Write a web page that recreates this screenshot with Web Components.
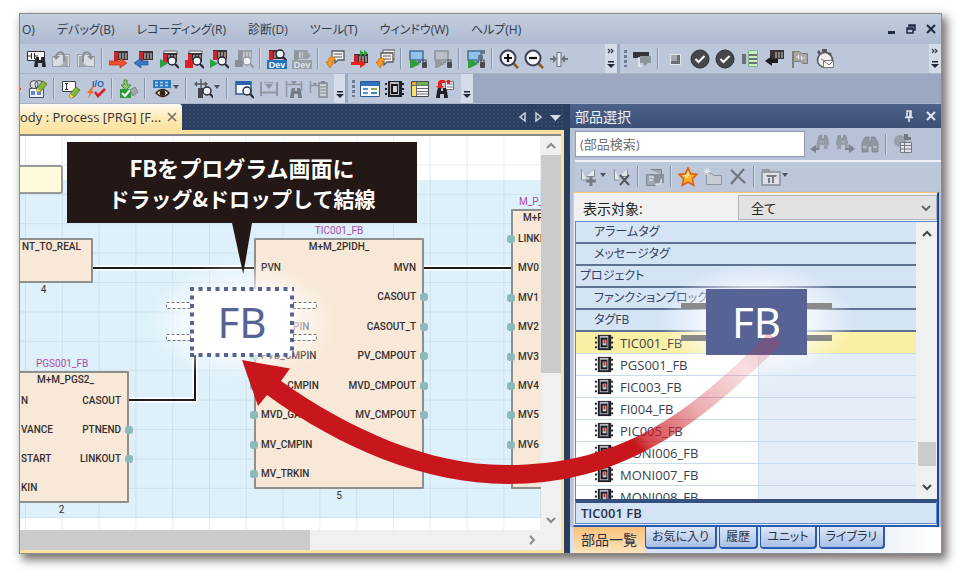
<!DOCTYPE html>
<html lang="ja">
<head>
<meta charset="utf-8">
<title>部品選択</title>
<style>
html,body{margin:0;background:#fff}
body{font-family:"Open Sans","Noto Sans CJK JP",sans-serif;font-feature-settings:"palt";color:#2b3245}
</style>
</head>
<body>
<app-window></app-window>
<script>
const plc=(x,y,a='#d2232a',b='#3b3234',c='#8b8584')=>`<path fill="${b}" d="M${x} ${y}h14v9h-14z"/><path fill="${a}" d="M${x} ${y+1}h4v9h-4z"/><path fill="${c}" d="M${x+5} ${y+2}h2v6h-2zM${x+8} ${y+2}h2v6h-2zM${x+11} ${y+2}h2v6h-2z"/>`;
const mag=(x,y,c='#262633')=>`<circle cx="${x}" cy="${y}" r="4" fill="#eef4fa" stroke="${c}" stroke-width="1.4"/><path d="M${x+3} ${y+3}l4 4" stroke="${c}" stroke-width="2.2"/>`;
const bino=(x,y,c)=>`<path fill="${c}" d="M${x+1} ${y+3}l1-3h3v3h2v-3h3l1 3 1 7h-4v-4h-4v4h-4z"/>`;
const pen=(x,y)=>`<path fill="#86b636" stroke="#4b6b22" stroke-width=".8" d="M${x+7} ${y}l4 3-6 7-4 1v-4z"/><path fill="#fbd54a" d="M${x+1} ${y+7}l4 3-4 1z"/>`;
const page=(x,y,c)=>`<path fill="#f3f3f1" stroke="${c}" stroke-width="1.3" d="M${x} ${y}h12v9h-6l-3 3v-3h-3z"/><path stroke="${c}" d="M${x+2} ${y+3}h8M${x+2} ${y+6}h8"/>`;
const pc=(s,f,w)=>`<path fill="${s}" stroke="${f}" stroke-width="1.5" d="M2 2h13v9h-13z"/><path fill="${w}" d="M2 11h5l5 4-8 4h-2z"/><path fill="${f}" d="M10 12h3v2h-3z"/><rect x="14" y="13" width="5" height="6" rx="1" fill="#4a4b50"/><path d="M15 13v-2h3v2" fill="none" stroke="#4a4b50" stroke-width="1.2"/>`;
const word=(t,x,y,c)=>`<text x="${x}" y="${y}" text-anchor="middle" font-family="Liberation Sans,sans-serif" font-size="9" font-weight="700" fill="${c}">${t}</text>`;
const chip=`<path fill="#20222a" d="M3 2h14v16h-14z"/><path fill="#b9bac0" d="M5 3h9v13h-9z"/><path fill="#17181d" d="M6 5h7v10h-7z"/><path fill="#cfd0d4" d="M8 7h4v6h-4z"/><path fill="#20222a" d="M0 4h2v2h-2zM0 9h2v2h-2zM0 14h2v2h-2zM17 4h2v2h-2zM17 9h2v2h-2zM17 14h2v2h-2z"/>`;
const ICONS={
 find:`<path fill="#f7f7f7" stroke="#2e2e33" d="M1.500 2.500h17v9h-17z"/><path stroke="#2e2e33" fill="none" d="M2 7h4M5.500 4v6M8.500 4v6M9 7h3"/>`+bino(8,8,'#27272c'),
 back:`<path fill="#d9dce1" stroke="#9ba0a8" d="M1.500 7.500h5v-2h12v12h-17z"/><path fill="#a5aab2" d="M12 7h5v10h-9q7-2 4-10z"/><path fill="none" stroke="#8a8f97" stroke-width="2" d="M5 8c1-6 7-6 8-1v6"/><path fill="#8a8f97" d="M2 7h7l-4 4z"/>`,
 fwd:`<path fill="#d9dce1" stroke="#9ba0a8" d="M18.500 7.500h-5v-2h-12v12h17z"/><path fill="#a5aab2" d="M8 7h-5v10h9q-7-2-4-10z"/><path fill="none" stroke="#8a8f97" stroke-width="2" d="M15 8c-1-6-7-6-8-1v6"/><path fill="#8a8f97" d="M18 7h-7l4 4z"/>`,
 write:plc(5,2)+`<path fill="#f0512b" stroke="#b62a14" stroke-width=".6" d="M0 12h11v-3l7 5-7 5v-3h-11z"/>`,
 read:plc(5,2)+`<path fill="#3b78c8" stroke="#1d4a91" stroke-width=".6" d="M14 12h-7v-3l-7 5 7 5v-3h7z"/>`,
 monstart:`<path fill="#eee" stroke="#666" d="M5 2h13v4h-13z"/>`+plc(4,4)+`<path fill="#2f9e3c" d="M1 10l8 4.500-8 4.500z"/>`+mag(13,12),
 monstop:`<path fill="#eee" stroke="#666" d="M5 2h13v4h-13z"/>`+plc(4,4)+`<path fill="#e01f26" d="M1 11h8v8h-8z"/>`+mag(13,12),
 watch:plc(4,1)+`<path fill="#2f9e3c" d="M1 10l8 4.500-8 4.500z"/>`+mag(13,12),
 watchoff:plc(4,1,'#8f939b','#9a9ea6','#c0c4cc')+`<path fill="#898d95" d="M1 11h8v7h-8z"/>`+mag(13,12,'#9599a1'),
 dev:plc(2,1)+mag(13,5)+`<path fill="#1c75bc" d="M0 11h20v9h-20z"/>`+word('Dev',10,19,'#fff'),
 devoff:plc(2,1,'#8f939b','#9a9ea6','#c0c4cc')+`<path fill="#9ba0a8" d="M0 11h20v9h-20zM11 3h5l3 4-4 3h-4z"/>`+word('Dev',10,19,'#dfe3ea'),
 jump:page(7,2,'#58595e')+`<path fill="#f79a1e" stroke="#c5650b" stroke-width=".7" d="M9 8q-6-1-6 5h-2l4 6 4-6h-2q0-2 3-2z"/>`,
 step:plc(4,5)+`<path fill="#34a045" d="M10 1l4 3-4 3zM14 1l4 3-4 3z"/><path fill="#e6231e" d="M1 13h9v-3l6 5-6 4v-3h-9z"/>`,
 jumpall:page(8,1,'#77787c')+page(6,4,'#58595e')+`<path fill="#f79a1e" stroke="#c5650b" stroke-width=".7" d="M8 9q-5-1-5 4h-2l4 6 4-6h-2q0-2 3-2z"/>`,
 sim:pc('#8fc3ee','#4b6e92','#2f9e3c'),
 simoff:pc('#b9bec8','#8d929a','#9599a1'),
 simall:pc('#8fc3ee','#4b6e92','#2f9e3c')+`<path fill="#6a7686" d="M15 1h4v4h-4zM12 6h5v4h-5z"/>`,
 zin:`<path d="M14 14l5 5" stroke="#8a5a20" stroke-width="2.500"/><circle cx="9" cy="9" r="7.500" fill="#f4f7fb" stroke="#3d4057" stroke-width="2"/><path stroke="#111" stroke-width="2.200" d="M5 9h8M9 5v8"/>`,
 zout:`<path d="M14 14l5 5" stroke="#8a5a20" stroke-width="2.500"/><circle cx="9" cy="9" r="7.500" fill="#f4f7fb" stroke="#3d4057" stroke-width="2"/><path stroke="#111" stroke-width="2.200" d="M5 9h8"/>`,
 fit:`<path fill="#e7ebf1" stroke="#6b7079" d="M8 3.500h4v14h-4z"/><path fill="#6b7079" d="M1 9h3v-3l4 4-4 4v-3h-3zM19 9h-3v-3l-4 4 4 4v-3h3z"/>`,
 rack:`<path fill="#33353a" d="M1 3h16v6h-16z"/><path fill="#8e949c" d="M8 7h11v7h-3l-3 3-2-3h-3z"/><path stroke="#e9edf2" stroke-width="1.500" fill="none" d="M7 8v9h3"/>`,
 stop:`<path fill="#a4a8ae" stroke="#e3e7ec" d="M5.500 5.500h10v10h-10z"/><path fill="#6a6d73" d="M12 6h3v9h-9v-3h6z"/>`,
 check:`<circle cx="10" cy="10" r="9" fill="#46474c" stroke="#2e2f34"/><path fill="none" stroke="#fff" stroke-width="2" d="M5.500 10l3 3 6-6"/>`,
 compare:`<path fill="#6c7278" d="M2 5h4v10h-4z"/><path fill="#c9ecc3" stroke="#85b583" d="M8.500 1.500h9v16h-9z"/><path fill="#6c7278" d="M9 5h8v2h-8zM9 9h8v2h-8zM9 13h8v2h-8z"/>`,
 load:plc(5,1,'#3b3234')+`<path fill="#1c1c20" d="M13 10h-6v-3l-7 5 7 5v-3h6z"/>`,
 flag:`<path fill="#a8a7a4" stroke="#7f7e7b" d="M3.500 2.500h6l2 2h6v10h-5l-2-2h-7z"/><path stroke="#7f7e7b" stroke-width="2" d="M3 2v17"/><path stroke="#eee" fill="none" d="M6 8h2M8.500 6v4M11.500 7v4M12 9h3"/>`,
 timer:`<circle cx="10" cy="11" r="7.500" fill="#efeeec" stroke="#55565a" stroke-width="1.600"/><path fill="#55565a" d="M7 0h5v3h-5zM2 3l2-2 2 3-2 2zM14 3l3 2-2 2-2-2z"/><path fill="#fff" stroke="#77787c" d="M8.500 11.500h10v7h-10z"/><path fill="none" stroke="#77787c" d="M9 12l5 4 4-4M6 10l4 2"/>`,
 edge:`<path fill="#fff3d8" stroke="#e5a947" d="M-2 .5h7.500v19h-7.500z"/><path fill="#e6231e" d="M0 5h3v9h-3z"/>`,
 props:`<path fill="#f1f3f8" stroke="#35507f" d="M1.500 9.500h14v9h-14z"/><circle cx="6" cy="5.500" r="4" fill="#d9dde4" stroke="#555"/><circle cx="11" cy="5.500" r="4" fill="none" stroke="#555"/><path fill="#6c84c9" d="M3 12h4v4h-4zM9 12h4v4h-4z"/>`+pen(8,2),
 edit:`<path fill="#fff" stroke="#3f4148" d="M1.500 2.500h13v10h-13z"/><path stroke="#333" d="M4 4.500h3M5.500 4.500v6M4 10.500h3"/>`+pen(8,8),
 io:word('I/O',12,8,'#2f5bb0')+`<path fill="#f4672a" d="M6 8l-5 6h3l-2 5 6-7h-3l3-4z"/><path fill="none" stroke="#d61f26" stroke-width="2.500" d="M9 13l3 4 7-7"/>`,
 verify:`<path fill="#8dc66d" stroke="#4d8b36" d="M5 1h3v5h4l-5 5-5-5h3z"/><path fill="#a5a9ae" stroke="#71757b" stroke-width=".8" d="M11 11l5-3 3 5-5 4z"/><path fill="#2b9a3a" d="M1 10h11v9h-11z"/><path fill="none" stroke="#fff" stroke-width="2" d="M3 14l3 3 5-6"/>`,
 eye:`<path fill="#2d78c3" d="M1 1h18v8h-18z"/><path stroke="#b9d8f4" stroke-width="1.400" stroke-dasharray="3 2" d="M3 3.500h13M3 6.500h13"/><path fill="#fff" stroke="#33221c" stroke-width="1.400" d="M4 14q7-7 13 0q-6 7-13 0z"/><circle cx="10.500" cy="14" r="3" fill="#33221c"/>`,
 target:`<path fill="none" stroke="#55575d" stroke-width="1.300" d="M2 5h12M8 0v10M4 3l-2 2 2 2M12 3l2 2-2 2"/><path fill="#44454a" d="M5 9h5v10h-5z"/>`+mag(14,12),
 winfind:`<path fill="#f4f8fc" stroke="#2a5797" stroke-width="1.500" d="M2 3h15v12h-15z"/><path fill="#2c62ad" d="M2 2h15v4h-15z"/>`+mag(13,12),
 ladder:`<path fill="none" stroke="#92979f" stroke-width="2" d="M2 3v14M18 3v14M3 13.500h14"/><path stroke="#9da2aa" d="M5 3.500h10"/><path fill="#8e939b" d="M6 5h8l-4 5z"/>`,
 ladfind:`<path fill="#bfc3c9" stroke="#92979f" stroke-width="1.500" d="M2.500 2v16M17.500 2v10M3 5.500h14"/><path fill="#8e939b" d="M7 2h6l-3 4z"/>`+bino(6,9,'#777c84'),
 ladlist:`<path fill="none" stroke="#92979f" stroke-width="1.500" d="M1.500 2v12M2 6.500h7"/><path fill="#c9ccd1" stroke="#868b93" stroke-width="1.500" d="M10 4h8v14h-8z"/><path stroke="#868b93" d="M11 8h6M11 11h6M11 14h6"/><path fill="#868b93" d="M4 4h4l-2 3zM12 2h4v3h-4z"/>`,
 form:`<path fill="#f4f7fb" stroke="#2c5795" d="M.5 2.500h19v15h-19z"/><path fill="#3172bd" d="M1 3h18v4h-18z"/><path stroke="#5a90c8" stroke-width="2" d="M3 10h5M3 14h5"/><path stroke="#8bb04d" stroke-width="2" d="M11 10h6"/><path stroke="#3f8aa0" stroke-width="2" d="M11 14h6"/>`,
 chip:chip,chipred:chip+`<path fill="#d8262b" d="M9 7h2v4h-2z"/>`,
 table:`<path fill="#fdfdfd" stroke="#4a4b4f" d="M1.500 2.500h17v15h-17z"/><path fill="#efa73c" d="M2 3h16v3h-16z"/><path fill="#72b44c" d="M7 3h11v3h-11z"/><path stroke="#6c6d72" d="M2 6.500h16M2 9.500h16M2 12.500h16M2 15h16M6.500 3v14"/><path fill="#f5e36c" d="M2 7h4v10h-4z"/>`,
 xref:`<path fill="#e3241f" d="M5 1h5v3h-3v3h2l-4 4-4-4h2v-4z"/><path fill="#f5f5f5" stroke="#777" d="M10.500 2.500h8v8h-8z"/><path stroke="#6f82ac" d="M12 5h6M12 8h6"/><path fill="#e3241f" d="M12 1h3v4h-3z"/>`+bino(1,9,'#1f1f24'),
 bback:bino(7,1,'#8f959e')+bino(6,5,'#989ea7')+`<path fill="#7f858e" d="M9 14h-3v-3l-6 4 6 4v-3h3z"/>`,
 bnext:bino(1,1,'#8f959e')+bino(2,5,'#989ea7')+`<path fill="#7f858e" d="M10 14h4v-4l6 5-6 4v-3h-4z"/>`,
 bfind:`<path fill="#9298a1" stroke="#70757d" stroke-width=".6" d="M2 9l3-6h4v5h2v-5h4l3 6v9h-6v-6h-4v6h-6z"/><path stroke="#d5d9df" d="M3 13h4M13 13h4"/>`,
 dbtable:`<circle cx="7" cy="7" r="6" fill="#999fa8"/><path fill="#e0e3e7" stroke="#747981" d="M7.500 8.500h11v10h-11z"/><path stroke="#747981" d="M8 11.500h10M8 15h10M11.500 9v9"/><path fill="#747981" d="M11 0h4v3h3v3h-7z"/>`,
 add:`<path fill="#e4e7ec" stroke="#878c94" d="M2.500 2v11h5M7.500 9.500h8v-7"/><path fill="none" stroke="#777c85" stroke-width="3" d="M12 9v10M7 14h10"/>`,
 del:`<path fill="#e4e7ec" stroke="#878c94" d="M2.500 2v11h5M7.500 9.500h8v-7"/><path stroke="#53575e" stroke-width="2" d="M8 8l9 10M17 8l-9 10"/>`,
 stack:`<path fill="#a2a8b1" stroke="#7e848d" d="M1.500 7.500h9v11h-9zM5.500 2.500h11v5"/><path fill="#8b919a" d="M9 7h10v9h-10z"/><path fill="none" stroke="#d8dce2" stroke-width="1.500" d="M4 10h5M4 13h4M10 17c5 2 7-2 6-5"/>`,
 star:`<path fill="#ffb52d" stroke="#e0560e" stroke-width="1.500" d="M10 1l2.700 5.800 6.300.7-4.700 4.300 1.400 6.400L10 15l-5.700 3.200 1.400-6.400L1 7.500l6.300-.7z"/><path fill="#ffe394" d="M10 4l1.600 4-3 3-4-2.500 3.700-.8z"/>`,
 folder:`<path fill="#c8ccd3" stroke="#8e939c" d="M3.500 6.500h5l2 2h8v9h-15z"/><path stroke="#e9edf2" d="M4 1v7M.5 4.500h7M1.500 2l5 5M6.500 2l-5 5"/>`,
 x:`<path stroke="#6f747d" stroke-width="2.200" d="M3 3l14 13M16 2l-13 15"/>`,
 tools:`<path fill="#dde0e5" stroke="#868b94" stroke-width="1.400" d="M1 5h18v13h-18zM1 3h7v2"/><path fill="#767b84" d="M5 8h11l-1 2h-9zM7 11h2v5h-2zM11 10h2v6h-2z"/>`
};
const svg=(n,s=20)=>`<svg class="i" width="${s}" height="${s}" viewBox="0 0 20 20" aria-hidden="true">${ICONS[n]}</svg>`;
const define=(name,css,html)=>customElements.define(name,class extends HTMLElement{
  constructor(){super();this.attachShadow({mode:'open'})}
  connectedCallback(){this.shadowRoot.innerHTML=`<style>*{box-sizing:border-box}button{font:inherit;color:inherit;border:0;padding:0;background:none}svg{display:block}${css}</style>${typeof html==='function'?html(this):html}`}
});

define('tool-bar',`
:host{display:flex;align-items:center;gap:5px;padding-left:var(--lead,6px);background:var(--bar,#bcc7d9);overflow:hidden}
button{display:flex;align-items:center;flex:none}
.sep{width:3px;height:21px;flex:none;background:linear-gradient(90deg,#8593ae 1px,#d3dbe8 1px 2px,transparent 2px)}
.grip{width:3px;height:17px;flex:none;background:repeating-linear-gradient(#6d7b97 0 3px,transparent 3px 5px)}
.dd{width:0;height:0;border:3px solid transparent;border-top:4px solid #4c5464;margin:0 1px 0 1px}
.edge{width:6px;overflow:hidden;margin-right:-3px}
.more{margin-left:auto;align-self:stretch;width:12px;background:#d5dce8;flex-direction:column;justify-content:space-between;padding:4px 0 5px}
`,el=>el.getAttribute('items').split(' ').map(t=>{
  if(t==='|')return '<span class="sep"></span>';
  if(t===':')return '<span class="grip"></span>';
  if(t==='more'||t==='more2')return `<button class="more" aria-label="ツールバー オプション"><svg width="8" height="6" viewBox="0 0 8 6">${t==='more2'?'<path fill="none" stroke="#3b4150" stroke-width="1.300" d="M1 1l2 2-2 2M4 1l2 2-2 2"/>':''}</svg><svg width="8" height="7" viewBox="0 0 8 7"><path fill="#23293a" d="M1 0h6v1.500h-6zM0 3h8l-4 4z"/></svg></button>`;
  const d=t.endsWith('+'),n=d?t.slice(0,-1):t;
  return `<button class="${n}" aria-label="${n}">${svg(n)}${d?'<span class="dd"></span>':''}</button>`;
}).join(''));

define('menu-bar',`
:host{display:flex;align-items:center;height:30px;padding:0 5px 0 2px;background:linear-gradient(#c4cede,#aebad0);color:#333b4f}
nav{display:flex;gap:22px;flex:1;font-size:12px}button{white-space:nowrap}
.w{display:flex;gap:10px}
`,`<nav>${['O)','デバッグ(B)','レコーディング(R)','診断(D)','ツール(T)','ウィンドウ(W)','ヘルプ(H)'].map(t=>`<button>${t}</button>`).join('')}</nav>
<div class="w"><button aria-label="最小化"><svg width="9" height="10"><path fill="#1e2a44" d="M1 7h7v3h-7z"/></svg></button>
<button aria-label="元に戻す"><svg width="10" height="10"><path fill="none" stroke="#1e2a44" stroke-width="1.500" d="M3 3v-2h6v5h-2M1 4h6v5h-6zM1 5h6M3 2h6"/></svg></button>
<button aria-label="閉じる"><svg width="10" height="10"><path stroke="#1e2a44" stroke-width="2" d="M1 1l8 8M9 1l-8 8"/></svg></button></div>`);

define('fb-block',`
:host{position:absolute;display:block;font:500 10px/12px Roboto,"Liberation Sans",sans-serif;color:#33302f}
.box{position:relative;height:100%;background:#f8e8d7;border:2px solid #8f8f8f;border-radius:1px;display:grid;grid-template-columns:auto auto;grid-template-rows:auto 1fr;justify-content:space-between}
header{grid-column:1/3;text-align:var(--ta,center);padding:1px 4px 0 var(--hp,4px)}
ul{list-style:none;margin:0;padding:9px 6px 7px var(--pl,5px);display:flex;flex-direction:column;justify-content:space-between}
.r{text-align:right}
li{height:12px;position:relative;white-space:nowrap}
li.d::before{content:"";position:absolute;top:2px;left:-11px;width:8px;height:8px;border-radius:3px;background:#8db9ba}
.r li.d::before{left:auto;right:-12px}
li.in{padding-left:32px}
.t{position:absolute;left:0;right:0;bottom:100%;text-align:var(--ta,center);padding:0 4px 1px var(--tp,4px);color:#ae4ba5;font-weight:400}
.n{position:absolute;left:0;right:var(--nr,0px);top:100%;padding-top:1px;text-align:center;font-weight:400}
`,el=>{const a=n=>el.getAttribute(n)||'';const li=s=>s?s.split(',').map(t=>`<li class="${t[0]==='*'?'d':t[0]==='~'?'in':''}">${t.replace(/[*~]/,'')}</li>`).join(''):'';
return `<div class="t">${a('name')}</div><div class="box"><header>${a('type')}</header><ul>${li(a('in'))}</ul><ul class="r">${li(a('out'))}</ul></div><div class="n">${a('order')}</div>`});

define('diagram-canvas',`
:host{position:relative;display:block;overflow:hidden;background:#fff}
.bg{position:absolute;left:0;top:0}
fb-block.a{left:-2px;top:102px;width:75px;height:45px;--ta:left;--hp:2px;--nr:24px}
fb-block.b{left:-2px;top:235px;width:111px;height:132px;--pl:1px;--hp:17px;--tp:18px;--ta:left;--nr:24px}
fb-block.c{left:234px;top:102px;width:170px;height:251px}
fb-block.d{left:491px;top:73px;width:80px;height:280px;--ta:left;--hp:10px;--tp:8px}
.note{position:absolute;left:-4px;top:29px;width:47px;height:29px;background:#fdfbdc;border:2px solid #999;border-radius:3px}
`,`<svg class="bg" width="100%" height="100%"><defs><pattern id="g" x="5" y="0" width="36.800" height="29.400" patternUnits="userSpaceOnUse"><path fill="none" stroke="#7590a0" stroke-opacity=".16" stroke-width="2" d="M0 0v29.400M0 29.400h36.800"/></pattern></defs>
<rect y="44" width="100%" height="338" fill="#def0fa"/><rect width="100%" height="100%" fill="url(#g)"/>
<path fill="none" stroke="#fff" stroke-width="5" d="M72 132h163M403 132h89M108 264h67v-50"/><path fill="none" stroke="#1c1a1a" stroke-width="2" d="M72 132h163M403 132h89M108 264h67v-50"/></svg>
<div class="note"></div>
<fb-block class="a" type="NT_TO_REAL" order="4"></fb-block>
<fb-block class="b" name="PGS001_FB" type="M+M_PGS2_" in="N,VANCE,START,KIN" out="CASOUT,*PTNEND,*LINKOUT, " order="2"></fb-block>
<fb-block class="c" name="TIC001_FB" type="M+M_2PIDH_" in="PVN, ,~PIN,*PVD_CMPIN,*MVD_CMPIN,*MVD_GAIN,*MV_CMPIN,*MV_TRKIN" out="MVN,*CASOUT,*CASOUT_T,*PV_CMPOUT,*MVD_CMPOUT,*MV_CMPOUT, , " order="5"></fb-block>
<fb-block class="d" name="M_P_" type="M+P" in="*LINKI,MV0,*MV1,*MV2,*MV3,*MV4,*MV5,*MV6, "></fb-block>`);

const chev=(d,c='#8a8a8a')=>`<svg width="10" height="8" viewBox="0 0 10 8"><path fill="none" stroke="${c}" stroke-width="2" d="${d}"/></svg>`;
define('editor-pane',`
:host{display:grid;grid-template-rows:26px 1fr;background:#2c3e5f;padding-right:6px;min-width:0}
.strip{display:flex;align-items:center;background:radial-gradient(circle,#354a6d 0 1px,transparent 1px) 0 0/4px 4px,#2c3e5f}
.tab{display:flex;align-items:center;gap:6px;height:100%;padding:0 5px 0 0;background:linear-gradient(#fffbf0,#fdebb8 50%,#fbe2a0);border-radius:0 3px 0 0;font-size:13px;color:#33303a;white-space:nowrap}
.nav{margin-left:auto;display:flex;gap:7px;padding-right:3px}
.body{display:grid;grid-template:minmax(0,1fr) 20px/minmax(0,1fr) 20px;background:#f0f0f0;border:solid #fbe2a0;border-width:4px 3px 3px 0}
diagram-canvas,.v{border-top:2px solid #888}
.v{display:flex;flex-direction:column;align-items:center;padding:6px 0}
.v i{width:100%;flex:1;margin:5px 0 auto;max-height:218px;background:#cbcbcb}
.v svg:last-child{margin-top:auto}
.h{display:flex;align-items:center;justify-content:space-between;padding-right:5px}
.h i{width:290px;height:100%;background:#cbcbcb}
`,`<div class="strip"><div class="tab"><span>ody : Process [PRG] [F...</span><button aria-label="閉じる"><svg width="10" height="10"><path stroke="#776f63" stroke-width="1.600" d="M1 1l8 8M9 1l-8 8"/></svg></button></div>
<div class="nav"><svg width="9" height="12"><path fill="none" stroke="#c9d2e1" stroke-width="1.500" d="M7 2v8l-5-4z"/></svg><svg width="9" height="12"><path fill="none" stroke="#c9d2e1" stroke-width="1.500" d="M2 2v8l5-4z"/></svg><svg width="11" height="12"><path fill="#d3dbe7" d="M0 4h11l-5.500 6z"/></svg></div></div>
<div class="body"><diagram-canvas></diagram-canvas><div class="v">${chev('M1 6l4-4 4 4')}<i></i>${chev('M1 2l4 4 4-4')}</div>
<div class="h"><i></i><svg width="8" height="10"><path fill="none" stroke="#8a8a8a" stroke-width="2" d="M2 1l4 4-4 4"/></svg></div></div>`);

define('parts-tree',`
:host{display:grid;grid-template-columns:minmax(0,1fr) 21px;grid-template-rows:minmax(0,1fr);overflow:hidden;border:solid #5b8bcb;border-width:1px 0 0 1px;background:#fff}
ul{list-style:none;margin:0;padding:0;height:0;min-height:100%;overflow:hidden;font-size:13px}
li{height:22px;display:flex;align-items:center;line-height:20px;border-bottom:1px solid #c9dbee;white-space:nowrap;background:linear-gradient(90deg,#fff 182px,#c9dbee 182px 183px,#e4edf8 183px)}
li.g{background:#d5e4f5;border-bottom:2px solid #5f7391;color:#33415f;padding-left:18px;font-size:12px}
li.r{padding-left:4px}
li.f{padding-left:19px;gap:6px;color:#3a3f4e}
li.s{background:#f9f0a3}
.sb{background:#f0f0f0;display:flex;flex-direction:column;align-items:center;padding:8px 0}
.sb i{width:18px;height:24px;background:#cbcbcb;margin:auto 0 17px}
`,`<ul><li class="g">アラームタグ</li><li class="g">メッセージタグ</li><li class="g r">プロジェクト</li><li class="g">ファンクションブロック</li><li class="g">タグFB</li>
${['TIC001','PGS001','FIC003','FI004','PIC005','MONI006','MONI007','MONI008'].map((t,i)=>`<li class="f${i?'':' s'}">${svg('chipred',19)}${t}_FB</li>`).join('')}</ul>
<div class="sb">${chev('M1 6l4-4 4 4','#444')}<i></i>${chev('M1 2l4 4 4-4','#444')}</div>`);

define('parts-panel',`
:host{display:flex;flex-direction:column;background:#b7c2d6;min-height:0}
.title{display:flex;align-items:center;gap:12px;height:24px;padding:0 5px;color:#eef2f8;font-size:14px;background:linear-gradient(#4c6089,#3c5077)}
.title span{flex:1}
.search{display:flex;align-items:center;height:32px;padding-left:5px}
input{width:230px;height:26px;border:1px solid #8d9bb5;padding:0 4px;font:13px "Open Sans","Noto Sans CJK JP",sans-serif;background:#fff}
input::placeholder{color:#6f6f6f;opacity:1}
.search tool-bar{flex:1;height:30px}
.acts{height:31px;border-top:2px solid #eef2f8;margin-left:5px}
.list{flex:1;min-height:0;display:flex;flex-direction:column;margin:1px 2px 0 3px;border:1px solid #fbc27a;border-right:2px solid #1c46a0;border-bottom:2px solid #2a5bb0;background:#f0f0f0;padding:1px 0 1px 1px}
.filter{display:grid;grid-template-columns:163px minmax(0,1fr);height:27px;align-items:center;font-size:14px;color:#222}
label{padding-left:8px}
.sel{position:relative;height:25px;font-size:13px}
select{appearance:none;width:100%;height:25px;background:#e2e2e2;border:1px solid #b5b5b5;border-radius:0;padding:0 12px;font:inherit;color:inherit}
.sel svg{position:absolute;right:6px;top:9px}
parts-tree{flex:1;min-height:0}
.info{height:25px;border:1px solid #5b8bcb;border-top:4px solid #33507f;background:#d5e4f5;padding:0 5px;font-size:13px;font-weight:600;line-height:21px}
.tabs{display:flex;gap:2px;height:26px;padding-left:3px;background:linear-gradient(90deg,#d4e1f5 60%,#fff);font-size:12px}
.tabs button{height:22px;padding:0 6px;border:solid #2a5bb0;border-width:0 2px 2px 1px;border-radius:0 0 4px 4px;background:linear-gradient(#dbe7f8,#a9c0e6);white-space:nowrap;line-height:20px}
.tabs button.on{height:26px;padding:0 8px;font-size:14px;border:0;border-radius:0;background:linear-gradient(#fbc27a,#fde3bd);margin-right:-2px}
`,`<div class="title"><span>部品選択</span><button aria-label="固定"><svg width="10" height="12"><path fill="none" stroke="#dfe6f1" stroke-width="1.500" d="M3 1h4v6h-4zM1 7.500h8M5 8v4M6 1v6"/></svg></button><button aria-label="閉じる"><svg width="10" height="10"><path stroke="#dfe6f1" stroke-width="2" d="M1 1l8 8M9 1l-8 8"/></svg></button></div>
<div class="search"><input type="text" aria-label="部品検索" placeholder="(部品検索)"><tool-bar style="--lead:5px;--bar:#b7c2d6" items="bback bnext bfind | dbtable"></tool-bar></div>
<tool-bar class="acts" style="--lead:4px" items="add+ del | stack | star folder x | tools+"></tool-bar>
<div class="list"><div class="filter"><label for="f">表示対象:</label><div class="sel"><select id="f"><option>全て</option></select>${chev('M1 2l4 4 4-4','#666')}</div></div>
<parts-tree></parts-tree><div class="info">TIC001 FB</div></div>
<div class="tabs"><button class="on">部品一覧</button><button>お気に入り</button><button>履歴</button><button>ユニット</button><button>ライブラリ</button></div>`);

define('drag-guide',`
:host{position:absolute;inset:0;pointer-events:none;overflow:hidden}
svg{position:absolute;left:0;top:0}
.glow{position:absolute;background:radial-gradient(closest-side,#ffffffd9 45%,#fff0)}
.g1{left:146px;top:261px;width:192px;height:120px}.g2{left:660px;top:264px;width:194px;height:116px}
.fb{position:absolute;display:flex;align-items:center;justify-content:center;font:42px/1 "Noto Sans",sans-serif}
.to{left:192px;top:289px;width:100px;height:66px;background:#fff;color:#566394}
.from{left:706px;top:289px;width:101px;height:66px;background:#566394;color:#fff}
.tip{position:absolute;left:67px;top:142px;width:350px;height:81px;display:flex;flex-direction:column;justify-content:center;align-items:center;background:#231815;color:#fff;font:700 22px/31px "Noto Sans CJK JP",sans-serif}
.tip span+span{font-size:21px}
.tip::after{content:"";position:absolute;left:165px;top:100%;width:20px;height:51px;background:#231815;clip-path:polygon(0 0,100% 0,56% 100%)}
`,`<div class="glow g1"></div><div class="glow g2"></div>
<svg width="100%" height="100%"><path fill="#fff" stroke="#777" stroke-dasharray="3 2" d="M166.500 302.500h24v6h-24zM166.500 334.500h24v6h-24zM293.500 302.500h23v6h-23zM293.500 334.500h23v6h-23z"/>
<path fill="#8a8a8a" d="M681 303h151v6h-151zM681 335h151v6h-151z"/></svg>
<div class="fb to">FB</div><div class="fb from">FB</div>
<svg width="100%" height="100%"><defs><linearGradient id="r" gradientUnits="userSpaceOnUse" x1="640" y1="450" x2="775" y2="338"><stop offset="0" stop-color="#c8161d"/><stop offset=".06" stop-color="#c8161d" stop-opacity=".8"/><stop offset=".4" stop-color="#cf2f3a" stop-opacity=".4"/><stop offset=".75" stop-color="#d5404a" stop-opacity=".17"/><stop offset="1" stop-color="#c8304a" stop-opacity=".28"/></linearGradient></defs>
<path fill="none" stroke="#566394" stroke-width="4" stroke-dasharray="4 4.500" d="M190 289h104M190 355h104M192 295.500v56M292 295.500v56"/>
<path fill="url(#r)" d="M242 360l48 8.500-9 12.500C350 430 430 465 505 465C610 465 680 425 768 333L782 343C690 436 615 484 508 484C425 484 340 448 267 395L258 406z"/></svg>
<div class="tip"><span>FBをプログラム画面に</span><span>ドラッグ&amp;ドロップして結線</span></div>`);

define('app-window',`
:host{display:flex;min-height:100vh;padding:13px 18px 26px 19px;box-sizing:border-box;position:relative}
main{flex:1;min-width:0;display:grid;grid-template-rows:30px 30px 30px minmax(0,1fr);border:1px solid #8c8c8f;background:#9ca8c1;box-shadow:4px 5px 9px 1px rgba(50,40,40,.65)}
.row{display:flex;gap:3px;min-width:0;border-bottom:1px solid #a9b4ca}
.one{flex:0 0 597px}.two{flex:1}
.three{flex:0 0 325px}.four{flex:0 0 125px}
.work{display:grid;grid-template-columns:minmax(0,1fr) 371px;min-height:0}
`,`<main><menu-bar></menu-bar>
<div class="row"><tool-bar class="one" items="find back fwd | write read monstart monstop watch watchoff | dev devoff | jump step jumpall | sim simoff | simall | zin zout fit more2"></tool-bar><tool-bar class="two" style="--lead:4px" items=": rack | stop check check compare load flag timer more2"></tool-bar></div>
<div class="row"><tool-bar class="three" style="--lead:0px" items="edge props | edit io | verify | eye+ | target+ | winfind ladder ladfind ladlist more"></tool-bar><tool-bar class="four" style="--lead:4px" items=": form chip table xref more"></tool-bar></div>
<div class="work"><editor-pane></editor-pane><parts-panel></parts-panel></div></main><drag-guide></drag-guide>`);
</script>
</body>
</html>
